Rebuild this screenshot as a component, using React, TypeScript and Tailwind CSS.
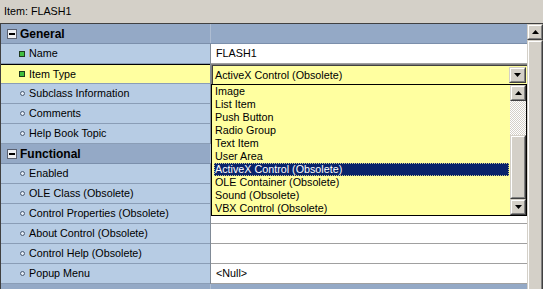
import React from 'react';

type Row = { label: string; kind: 'dot' | 'green'; value?: string; combo?: boolean };

const general: Row[] = [
  { label: 'Name', kind: 'green', value: 'FLASH1' },
  { label: 'Item Type', kind: 'green', combo: true },
  { label: 'Subclass Information', kind: 'dot' },
  { label: 'Comments', kind: 'dot' },
  { label: 'Help Book Topic', kind: 'dot' },
];

const functional: Row[] = [
  { label: 'Enabled', kind: 'dot' },
  { label: 'OLE Class (Obsolete)', kind: 'dot' },
  { label: 'Control Properties (Obsolete)', kind: 'dot' },
  { label: 'About Control (Obsolete)', kind: 'dot' },
  { label: 'Control Help (Obsolete)', kind: 'dot' },
  { label: 'Popup Menu', kind: 'dot', value: '<Null>' },
];

const itemTypes = [
  'Image',
  'List Item',
  'Push Button',
  'Radio Group',
  'Text Item',
  'User Area',
  'ActiveX Control (Obsolete)',
  'OLE Container (Obsolete)',
  'Sound (Obsolete)',
  'VBX Control (Obsolete)',
];

function Arrow({ up }: { up?: boolean }) {
  return (
    <svg width="7" height="4" viewBox="0 0 7 4">
      <polygon points={up ? '3.5,0 7,4 0,4' : '0,0 7,0 3.5,4'} fill="#000" />
    </svg>
  );
}

// raised win2k style button
function Btn({ up, className = '' }: { up?: boolean; className?: string }) {
  return (
    <div className={`border-t border-l border-[#d4d0c8] border-r border-b border-r-[#404040] border-b-[#404040] ${className}`}>
      <div className="w-full h-full bg-[#d4d0c8] border-t border-l border-white border-r border-b border-r-[#808080] border-b-[#808080] flex items-center justify-center">
        <Arrow up={up} />
      </div>
    </div>
  );
}

function Header({ title }: { title?: string }) {
  return (
    <div className="flex h-[20px] bg-[#94a9c6] border-b border-[#7b8fab]">
      <div className="w-[209px] flex items-center pl-[6px] gap-[3px]">
        <div className="w-[10px] h-[10px] bg-[#eef0f4] border border-[#5a6070] flex items-center justify-center">
          <div className="w-[6px] h-[2px] bg-black" />
        </div>
        {title && <span className="font-bold text-[12px] text-black">{title}</span>}
      </div>
      <div className="w-px bg-[#aebdd2]" />
      <div className="flex-1" />
    </div>
  );
}

function Combo() {
  return (
    <div className="h-full border-t border-l border-[#808080]">
      <div className="h-full border-t border-l border-[#404040] bg-[#ffffa0] flex items-center justify-between pl-[2px] pr-[1px]">
        <span>ActiveX Control (Obsolete)</span>
        <Btn className="w-[17px] h-[16px]" />
      </div>
    </div>
  );
}

function PropRow({ row }: { row: Row }) {
  const sel = row.combo;
  return (
    <div className="flex h-[20px]">
      <div
        className={`w-[209px] flex items-center pl-[18px] gap-[4px] border-b ${
          sel ? 'bg-[#ffffa0] border-t border-t-black border-b-[#8a9db6]' : 'bg-[#b7cce4] border-[#8a9db6]'
        }`}
      >
        {row.kind === 'green' ? (
          <div className="w-[6px] h-[6px] border border-[#1e3a1e] bg-[#3fbf3f]" />
        ) : (
          <div className="ml-[1px] w-[5px] h-[5px] rounded-full border border-[#4a5a70] bg-[#e6eef8]" />
        )}
        <span>{row.label}</span>
      </div>
      <div className="w-px bg-[#808a96]" />
      <div className={`w-[316px] ${sel ? '' : 'bg-white border-b border-[#a0a0a0] pl-[5px] flex items-center'}`}>
        {sel ? <Combo /> : row.value ? <span>{row.value}</span> : null}
      </div>
    </div>
  );
}

function DropList() {
  return (
    <div className="absolute left-[210px] top-[60px] w-[316px] h-[132px] border border-black bg-[#ffffa0] flex">
      <div className="flex-1 flex flex-col pl-[2px] pr-[1px]">
        {itemTypes.map((t) => {
          const on = t === 'ActiveX Control (Obsolete)';
          return (
            <div
              key={t}
              className={`h-[13px] leading-[13px] pl-px ${
                on ? 'bg-[#0a246a] text-white outline-1 outline-dotted outline-[#c8c890] -outline-offset-1' : ''
              }`}
            >
              {t}
            </div>
          );
        })}
      </div>
      <div className="w-[16px] flex flex-col">
        <Btn up className="h-[16px]" />
        <div className="h-[34px] bg-[repeating-conic-gradient(#d4d0c8_0_25%,#ffffff_0_50%)] bg-[length:2px_2px]" />
        <div className="flex-1 border-t border-l border-[#d4d0c8] border-r border-b border-r-[#404040] border-b-[#404040]">
          <div className="h-full bg-[#d4d0c8] border-t border-l border-white border-r border-b border-r-[#808080] border-b-[#808080]" />
        </div>
        <Btn className="h-[16px]" />
      </div>
    </div>
  );
}

export default function App() {
  return (
    <div className="w-[543px] h-[289px] overflow-hidden bg-[#d4d0c8] text-[10.75px] text-black font-['Tahoma','Liberation_Sans',sans-serif]">
      <div className="h-[23px] pl-[4px] pt-[3px]">Item: FLASH1</div>
      <div className="flex border-t border-[#404040]">
        <div className="relative w-[527px] border-l border-[#404040]">
          <Header title="General" />
          {general.map((r) => (
            <PropRow key={r.label} row={r} />
          ))}
          <Header title="Functional" />
          {functional.map((r) => (
            <PropRow key={r.label} row={r} />
          ))}
          <Header />
          <DropList />
        </div>
        <div className="w-[16px] flex flex-col">
          <Btn up className="h-[16px]" />
          <div className="h-[260px] border-t border-l border-[#d4d0c8] border-r border-b border-r-[#404040] border-b-[#404040]">
            <div className="h-full bg-[#d4d0c8] border-t border-l border-white border-r border-b border-r-[#808080] border-b-[#808080]" />
          </div>
        </div>
      </div>
    </div>
  );
}
